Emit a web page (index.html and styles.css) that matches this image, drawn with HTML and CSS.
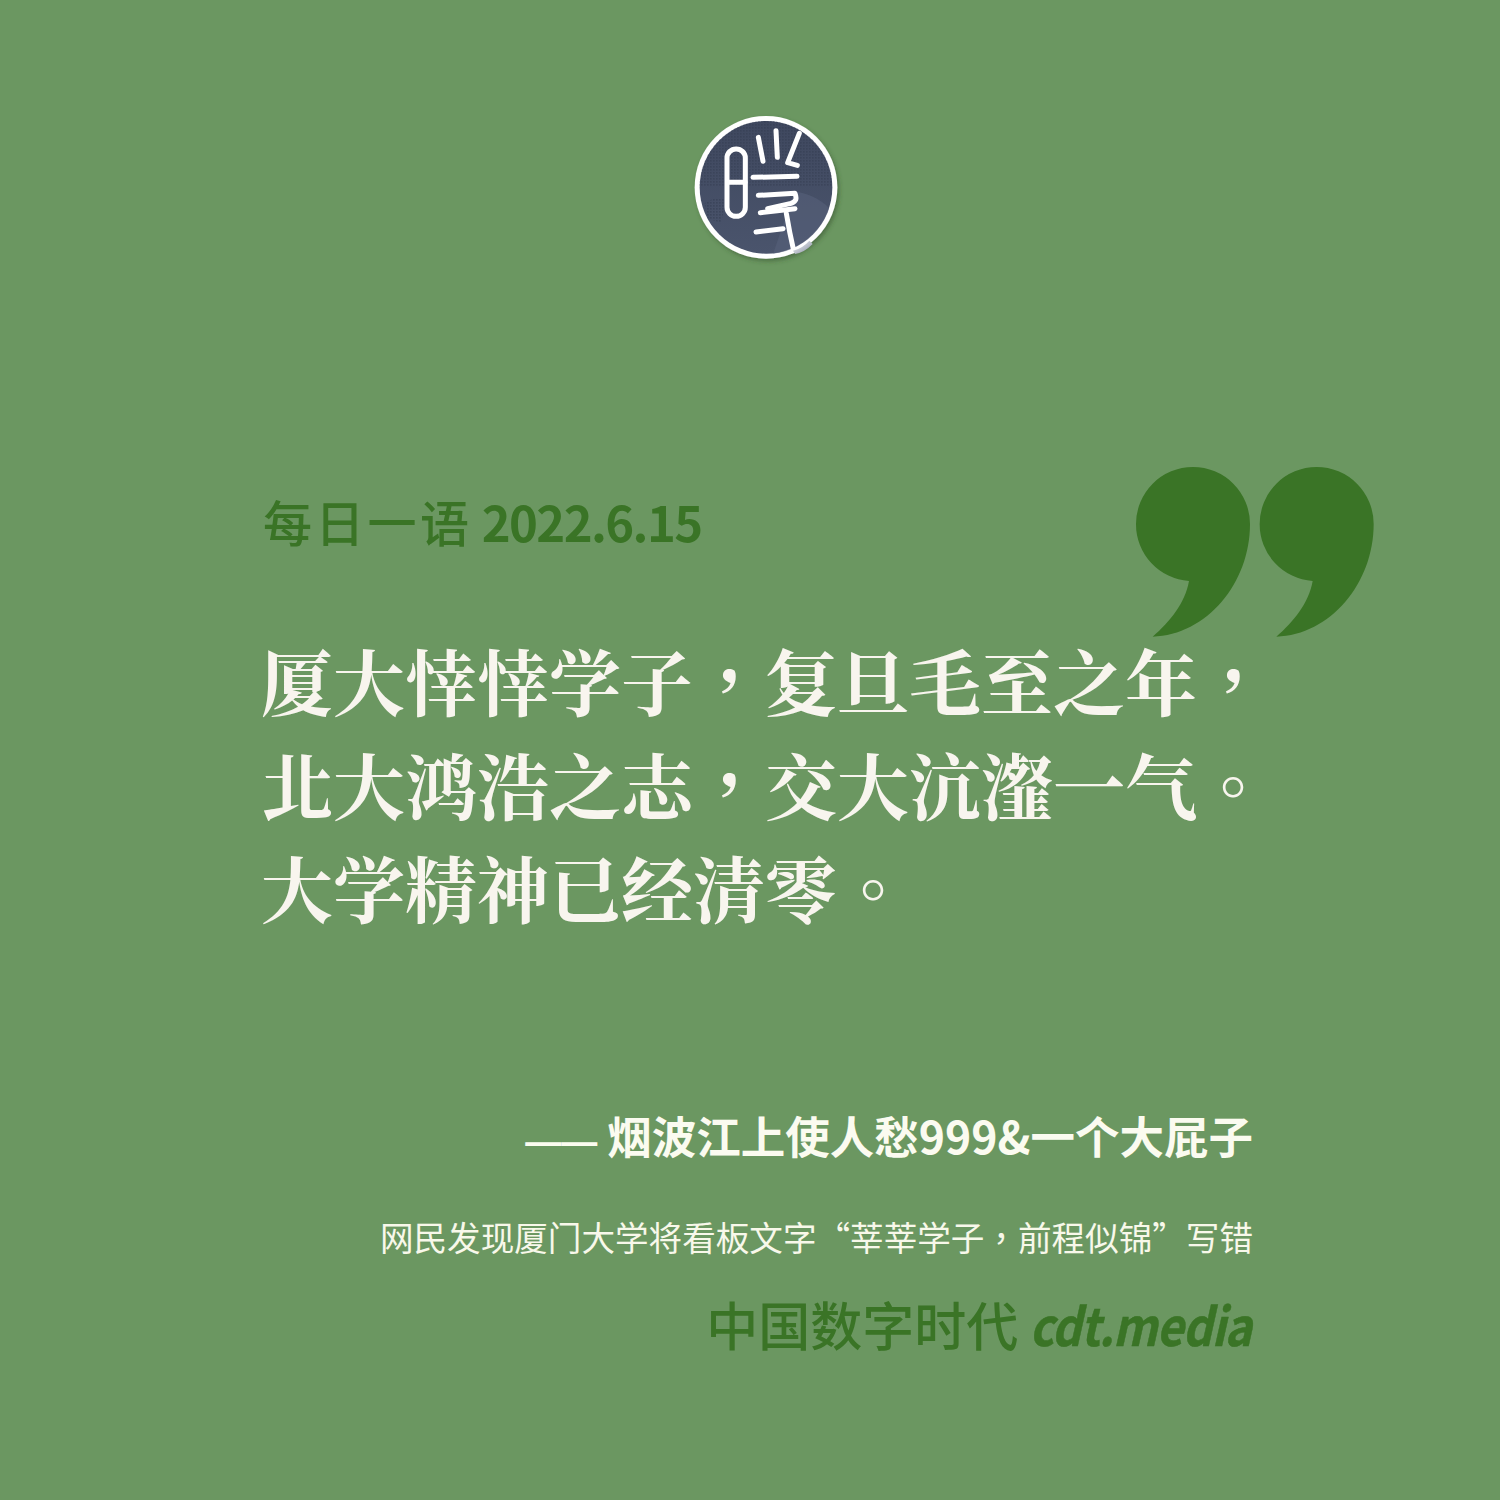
FILE: index.html
```html
<!DOCTYPE html>
<html lang="zh-TW">
<head>
<meta charset="utf-8">
<title>每日一语</title>
<link rel="stylesheet" href="styles.css">
</head>
<body>
<main class="card">
  <header class="logo-row">
    <svg class="logo" viewBox="0 0 570 540" width="190" height="180" aria-hidden="true">
      <defs>
        <clipPath id="disc"><circle cx="285" cy="262" r="200"/></clipPath>
        <pattern id="dots" width="9" height="9" patternUnits="userSpaceOnUse"><rect width="5" height="5" fill="#2f384c"/></pattern>
        <filter id="soft" x="-20%" y="-20%" width="140%" height="140%"><feDropShadow dx="6" dy="8" stdDeviation="7" flood-color="#2f4a2a" flood-opacity=".5"/></filter>
        <linearGradient id="glint" x1="0" y1="0" x2="1" y2="1"><stop offset="0" stop-color="#fff"/><stop offset="1" stop-color="#7f889c"/></linearGradient>
        <linearGradient id="body" x1="0" y1="0" x2="0" y2="1"><stop offset="0" stop-color="#3f485f"/><stop offset="1" stop-color="#4a546c"/></linearGradient>
      </defs>
      <circle cx="285" cy="262" r="214" fill="#fff" filter="url(#soft)"/>
      <circle cx="285" cy="262" r="199" fill="url(#body)"/>
      <g clip-path="url(#disc)">
        <rect x="80" y="60" width="410" height="200" fill="url(#dots)" opacity=".4"/>
        <path d="M100 310 Q135 285 165 300 L150 370 L110 355 Z" fill="url(#dots)" opacity=".45"/>
        <path d="M370 275 C420 280 465 305 490 345 L490 480 L300 480 Z" fill="#56617a" opacity=".6"/>
      </g>
      <g fill="none" stroke="#fff" stroke-width="15" stroke-linecap="round" stroke-linejoin="round">
        <rect x="168" y="147" width="55" height="202" rx="27"/>
        <path d="M170 247 H222"/>
        <path d="M315 92 L319 172"/>
        <path d="M262 112 L276 184"/>
        <path d="M385 100 L350 188 L379 196"/>
        <path d="M246 232 L378 229"/>
        <path d="M262 286 L372 280 C378 296 376 304 360 310 L290 326"/>
        <path d="M268 338 L372 326"/>
        <path d="M255 396 L336 386"/>
        <path d="M346 340 Q356 400 368 452"/>
      </g>
      <path d="M366 452 Q395 445 415 422 L425 432 Q400 458 372 462 Z" fill="url(#glint)"/>
    </svg>
  </header>
  <section class="quote">
    <svg class="mark" viewBox="0 0 810 600" width="270" height="200" aria-hidden="true">
      <path fill="#3a7426" d="M48 222A171 171 0 1 1 390 222C390 400 260 555 98 560C150 515 195 460 207 393A171 171 0 0 1 48 222Z"/>
      <path fill="#3a7426" d="M419 222A171 171 0 1 1 761 222C761 400 631 555 469 560C521 515 566 460 578 393A171 171 0 0 1 419 222Z"/>
    </svg>
    <h2 class="date"><span class="date-cn">每日一语</span> 2022.6.15</h2>
    <p class="text">厦大悻悻学子，复旦毛至之年，<br>北大鸿浩之志，交大沆瀣一气。<br>大学精神已经清零。</p>
  </section>
  <footer class="credit">
    <p class="author"><span class="dash">——</span> 烟波江上使人愁999&amp;一个大屁子</p>
    <p class="note">网民发现厦门大学将看板文字“莘莘学子，前程似锦”写错</p>
    <p class="brand">中国数字时代 <em>cdt.media</em></p>
  </footer>
</main>
</body>
</html>
```
FILE: styles.css
```css
* { box-sizing: border-box; margin: 0; padding: 0; }
html, body { background: #6b9761; }
.card {
  width: 1500px;
  height: 1500px;
  display: flex;
  flex-direction: column;
  font-family: "Noto Sans CJK SC", sans-serif;
  padding: 100px 247px 0 263px;
}
.logo-row { display: flex; justify-content: center; height: 180px; }
.logo { display: block; flex: none; margin-left: 16px; }
.quote { position: relative; margin-top: 170px; }
.mark { position: absolute; left: 857px; top: 0; }
.date {
  font-family: "Noto Sans CJK TC", sans-serif;
  font-size: 49px;
  font-weight: 700;
  line-height: 68px;
  color: #3a7426;
  padding-top: 37px;
  letter-spacing: -1.6px;
}
.date-cn { font-weight: 500; letter-spacing: 3.3px; }
.text {
  position: relative;
  margin: 73px 0 0 -2px;
  font-family: "Noto Serif CJK TC", serif;
  font-size: 72px;
  font-weight: 700;
  line-height: 103.5px;
  color: #f8f5ee;
  white-space: nowrap;
}
.credit { margin-top: 166px; text-align: right; white-space: nowrap; }
.author { font-size: 44.5px; font-weight: 700; line-height: 60px; color: #fbfbf0; }
.dash { font-family: "Liberation Sans", sans-serif; font-size: 36px; }
.note { margin-top: 41px; font-family: "Noto Sans CJK TC", sans-serif; font-size: 33.6px; font-weight: 400; line-height: 48px; color: #f8f8ea; }
.brand { margin-top: 28px; font-size: 52px; font-weight: 500; line-height: 70px; color: #3a7426; }
.brand em { display: inline-block; margin: 0 2px 0 -28px; font-weight: 700; font-style: italic; letter-spacing: -1px; transform: scaleX(.89); transform-origin: right center; -webkit-text-stroke: .5px #3a7426; }
```
